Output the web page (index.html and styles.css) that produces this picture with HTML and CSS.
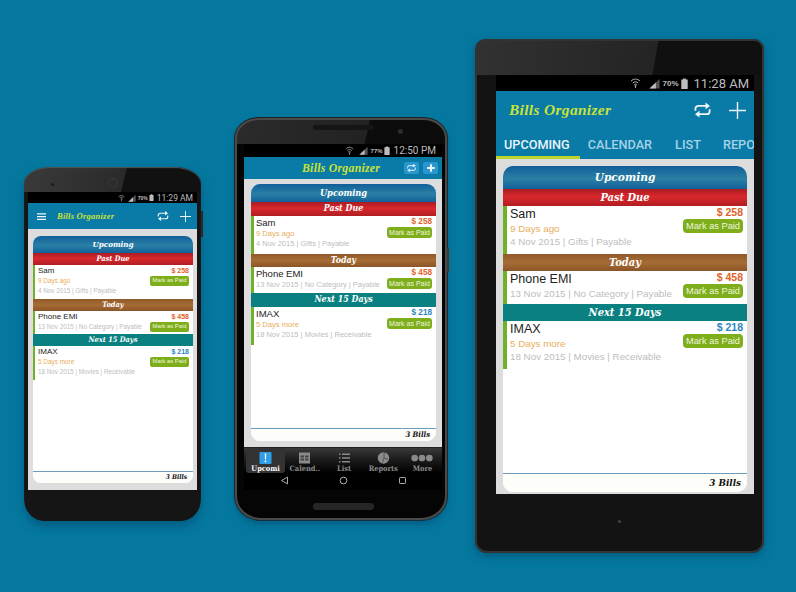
FILE: index.html
```html
<!DOCTYPE html>
<html lang="en">
<head>
<meta charset="utf-8">
<title>Bills Organizer</title>
<link rel="stylesheet" href="styles.css">
</head>
<body>
<svg class="defs" aria-hidden="true">
  <symbol id="wifi" viewBox="0 0 24 24"><path d="M2 8c6-6 14-6 20 0M6 12c4-3.500 8-3.500 12 0M9 15.500c2-1.500 4-1.500 6 0" fill="none" stroke="currentColor" stroke-width="2"/><path d="M10 17h4v2h-1v4h-2v-4h-1z" fill="currentColor"/></symbol>
  <symbol id="signal" viewBox="0 0 24 24"><path d="M23 2v21H1z" fill="#555"/><path d="M15 10v13H1z" fill="currentColor"/></symbol>
  <symbol id="battery" viewBox="0 0 14 24"><path d="M4 1h6v2h4v21H0V3h4z" fill="currentColor"/></symbol>
  <symbol id="menu" viewBox="0 0 24 24"><path d="M0 3h24v3.500H0zM0 10.500h24V14H0zM0 18h24v3.500H0z" fill="currentColor"/></symbol>
  <symbol id="repeat" viewBox="0 0 24 24"><path d="M2.500 13v-2.500a4 4 0 0 1 4-4H17M21.500 11v2.500a4 4 0 0 1-4 4H7" fill="none" stroke="currentColor" stroke-width="2.400"/><path d="M16 2l6 4.500-6 4.500zM8 13l-6 4.500 6 4.500z" fill="currentColor"/></symbol>
  <symbol id="plus" viewBox="0 0 24 24"><path d="M11 0h2v11h11v2H13v11h-2V13H0v-2h11z" fill="currentColor"/></symbol>
  <symbol id="plusbold" viewBox="0 0 24 24"><path d="M9.500 3h5v6.500H21v5h-6.500V21h-5v-6.500H3v-5h6.500z" fill="currentColor"/></symbol>
  <symbol id="alert" viewBox="0 0 24 24"><rect width="24" height="24" rx="2" fill="#2f9fe8"/><path d="M10.500 3h3l-.5 12h-2zM10.500 17h3v3.500h-3z" fill="#fff"/></symbol>
  <symbol id="cal" viewBox="0 0 24 24"><path d="M1 1h22v22H1z" fill="#8a8a8a"/><path d="M4 7h7v4H4zM13 7h7v4h-7zM4 13h7v4H4zM13 13h7v4h-7z" fill="#444"/></symbol>
  <symbol id="list" viewBox="0 0 24 24"><path d="M1 3h3v3H1zM7 3h16v3H7zM1 10.500h3v3H1zM7 10.500h16v3H7zM1 18h3v3H1zM7 18h16v3H7z" fill="#8a8a8a"/></symbol>
  <symbol id="pie" viewBox="0 0 24 24"><circle cx="12" cy="12" r="11.500" fill="#8a8a8a"/><path d="M13 12V2l2-.5M13 12l8 3M13 12l-3 9" stroke="#333" stroke-width="1.200" fill="none"/></symbol>
  <symbol id="dots" viewBox="0 0 36 12"><circle cx="6" cy="6" r="5.500" fill="#8a8a8a"/><circle cx="18" cy="6" r="5.500" fill="#8a8a8a"/><circle cx="30" cy="6" r="5.500" fill="#8a8a8a"/></symbol>
  <symbol id="back" viewBox="0 0 24 24"><path d="M20 3v18L4 12z" fill="none" stroke="currentColor" stroke-width="2.500" stroke-linejoin="round"/></symbol>
  <symbol id="home" viewBox="0 0 24 24"><circle cx="12" cy="12" r="9" fill="none" stroke="currentColor" stroke-width="2.500"/></symbol>
  <symbol id="recent" viewBox="0 0 24 24"><rect x="4" y="4" width="16" height="16" rx="2" fill="none" stroke="currentColor" stroke-width="2.500"/></symbol>
</svg>

<main class="stage">

  <section class="phone phone-sm">
    <span class="cam cam-sm"></span>
    <span class="cam cam-dot"></span>
    <span class="side side-sm"></span>
    <div class="screen">
      <div class="status">
        <svg class="st-wifi"><use href="#wifi"/></svg>
        <svg class="st-signal"><use href="#signal"/></svg>
        <span class="pct">70%</span>
        <svg class="st-batt"><use href="#battery"/></svg>
        <span class="time">11:29 AM</span>
      </div>
      <header class="appbar">
        <svg class="ic-menu"><use href="#menu"/></svg>
        <span class="title">Bills Organizer</span>
        <span class="spacer"></span>
        <svg class="ic-repeat"><use href="#repeat"/></svg>
        <svg class="ic-plus"><use href="#plus"/></svg>
      </header>
      <div class="content">
        <div class="card">
          <h2 class="sec sec-title">Upcoming</h2>
          <h3 class="sec sec-red">Past Due</h3>
          <div class="item tall">
            <div class="left"><div class="name">Sam</div><div class="sub">9 Days ago</div><div class="meta">4 Nov 2015 | Gifts | Payable</div></div>
            <div class="right"><div class="amt due">$ 258</div><button class="pay">Mark as Paid</button></div>
          </div>
          <h3 class="sec sec-brown">Today</h3>
          <div class="item short">
            <div class="left"><div class="name">Phone EMI</div><div class="meta">13 Nov 2015 | No Category | Payable</div></div>
            <div class="right"><div class="amt due">$ 458</div><button class="pay">Mark as Paid</button></div>
          </div>
          <h3 class="sec sec-teal">Next 15 Days</h3>
          <div class="item tall">
            <div class="left"><div class="name">IMAX</div><div class="sub">5 Days more</div><div class="meta">18 Nov 2015 | Movies | Receivable</div></div>
            <div class="right"><div class="amt rec">$ 218</div><button class="pay">Mark as Paid</button></div>
          </div>
          <div class="fill"></div>
          <div class="foot">3 Bills</div>
        </div>
      </div>
    </div>
  </section>

  <section class="phone phone-md">
    <span class="speaker speaker-top"></span>
    <span class="cam cam-md"></span>
    <span class="side side-md"></span>
    <div class="screen">
      <div class="status">
        <svg class="st-wifi"><use href="#wifi"/></svg>
        <svg class="st-signal"><use href="#signal"/></svg>
        <span class="pct">77%</span>
        <svg class="st-batt"><use href="#battery"/></svg>
        <span class="time">12:50 PM</span>
      </div>
      <header class="appbar">
        <span class="title">Bills Organizer</span>
        <span class="spacer"></span>
        <span class="btn-square"><svg class="ic-repeat"><use href="#repeat"/></svg></span>
        <span class="btn-square"><svg class="ic-plus"><use href="#plusbold"/></svg></span>
      </header>
      <div class="content">
        <div class="card">
          <h2 class="sec sec-title">Upcoming</h2>
          <h3 class="sec sec-red">Past Due</h3>
          <div class="item tall">
            <div class="left"><div class="name">Sam</div><div class="sub">9 Days ago</div><div class="meta">4 Nov 2015 | Gifts | Payable</div></div>
            <div class="right"><div class="amt due">$ 258</div><button class="pay">Mark as Paid</button></div>
          </div>
          <h3 class="sec sec-brown">Today</h3>
          <div class="item short">
            <div class="left"><div class="name">Phone EMI</div><div class="meta">13 Nov 2015 | No Category | Payable</div></div>
            <div class="right"><div class="amt due">$ 458</div><button class="pay">Mark as Paid</button></div>
          </div>
          <h3 class="sec sec-teal">Next 15 Days</h3>
          <div class="item tall">
            <div class="left"><div class="name">IMAX</div><div class="sub">5 Days more</div><div class="meta">18 Nov 2015 | Movies | Receivable</div></div>
            <div class="right"><div class="amt rec">$ 218</div><button class="pay">Mark as Paid</button></div>
          </div>
          <div class="fill"></div>
          <div class="foot">3 Bills</div>
        </div>
      </div>
      <nav class="bottom-tabs">
        <div class="btab active"><svg class="bt-ic"><use href="#alert"/></svg><span>Upcomi</span></div>
        <div class="btab"><svg class="bt-ic"><use href="#cal"/></svg><span>Calend..</span></div>
        <div class="btab"><svg class="bt-ic"><use href="#list"/></svg><span>List</span></div>
        <div class="btab"><svg class="bt-ic"><use href="#pie"/></svg><span>Reports</span></div>
        <div class="btab"><svg class="bt-dots"><use href="#dots"/></svg><span>More</span></div>
      </nav>
      <div class="sysnav">
        <svg class="nav-ic"><use href="#back"/></svg>
        <svg class="nav-ic"><use href="#home"/></svg>
        <svg class="nav-ic"><use href="#recent"/></svg>
      </div>
    </div>
    <span class="speaker speaker-bottom"></span>
  </section>

  <section class="phone phone-lg">
    <span class="led"></span>
    <div class="screen">
      <div class="status">
        <svg class="st-wifi"><use href="#wifi"/></svg>
        <svg class="st-signal"><use href="#signal"/></svg>
        <span class="pct">70%</span>
        <svg class="st-batt"><use href="#battery"/></svg>
        <span class="time">11:28 AM</span>
      </div>
      <header class="appbar">
        <span class="title">Bills Organizer</span>
        <span class="spacer"></span>
        <svg class="ic-repeat"><use href="#repeat"/></svg>
        <svg class="ic-plus"><use href="#plus"/></svg>
      </header>
      <div class="top-tabs">
        <span class="ttab on">UPCOMING</span>
        <span class="ttab t2">CALENDAR</span>
        <span class="ttab t3">LIST</span>
        <span class="ttab t4">REPO</span>
      </div>
      <div class="content">
        <div class="card">
          <h2 class="sec sec-title">Upcoming</h2>
          <h3 class="sec sec-red">Past Due</h3>
          <div class="item tall">
            <div class="left"><div class="name">Sam</div><div class="sub">9 Days ago</div><div class="meta">4 Nov 2015 | Gifts | Payable</div></div>
            <div class="right"><div class="amt due">$ 258</div><button class="pay">Mark as Paid</button></div>
          </div>
          <h3 class="sec sec-brown">Today</h3>
          <div class="item short">
            <div class="left"><div class="name">Phone EMI</div><div class="meta">13 Nov 2015 | No Category | Payable</div></div>
            <div class="right"><div class="amt due">$ 458</div><button class="pay">Mark as Paid</button></div>
          </div>
          <h3 class="sec sec-teal">Next 15 Days</h3>
          <div class="item tall">
            <div class="left"><div class="name">IMAX</div><div class="sub">5 Days more</div><div class="meta">18 Nov 2015 | Movies | Receivable</div></div>
            <div class="right"><div class="amt rec">$ 218</div><button class="pay">Mark as Paid</button></div>
          </div>
          <div class="fill"></div>
          <div class="foot">3 Bills</div>
        </div>
      </div>
    </div>
  </section>

</main>
</body>
</html>
```

FILE: styles.css
```css
* { box-sizing: border-box; }
html, body { margin: 0; padding: 0; }
body { background: #05789f; font-family: "Liberation Sans", Arial, sans-serif; }
.defs { position: absolute; width: 0; height: 0; overflow: hidden; }

.stage {
  position: relative;
  width: 796px;
  height: 592px;
  overflow: hidden;
  background: #05789f;
}

/* each device sits on a free canvas */
.phone {
  position: absolute;
  display: flex;
  flex-direction: column;
}

.phone-sm {
  left: 24px; top: 167px; width: 177px; height: 354px;
  padding: 25px 4px 31px 4px;
  border-radius: 26px 26px 20px 20px / 16px 16px 22px 22px;
  background: linear-gradient(104deg, #3a3a3a 0%, #2a2a2a 56%, #111 56.6%) top / 100% 25px no-repeat, #151515;
  box-shadow: 0 5px 9px rgba(0, 70, 105, .55), inset 0 1px 1px #555;
  --status: 11px; --bar: 26px;
  --pad-l: 5px; --pad-r: 4px; --pad-t: 7px; --pad-b: 7px;
  --h-title: 17px; --h-sec: 12px; --h-tall: 34px; --h-short: 23px; --h-foot: 12px;
  --f-sec: 7.400px; --f-title: 8px; --f-foot: 6.600px;
  --bar-w: 2px; --inset: 3px;
  --f-name: 8px; --f-sub: 6.400px; --f-meta: 6.300px; --f-amt: 7px; --f-btn: 5.800px;
  --pt: 1px; --nl: 10px; --sl: 10px; --ml: 9px; --al: 10px; --rp: 1px;
  --btn-w: 39px; --btn-h: 9.500px; --radius: 8px; --btn-r: 2px;
}

.phone-md {
  left: 235px; top: 118px; width: 212px; height: 402px;
  padding: 24px 3px 28px 7px;
  border-radius: 24px 24px 26px 26px / 20px 20px 24px 24px;
  border: 2px solid #4a4a4a;
  background: linear-gradient(102deg, #2b2b2b 0%, #222 62%, #0c0c0c 62.6%) top / 100% 24px no-repeat, #050505;
  box-shadow: 0 4px 7px rgba(0, 70, 105, .55), 0 0 0 1px #222;
  --status: 13px; --bar: 22px;
  --pad-l: 7px; --pad-r: 6px; --pad-t: 5px; --pad-b: 6px;
  --h-title: 18px; --h-sec: 13.500px; --h-tall: 38px; --h-short: 26px; --h-foot: 13px;
  --f-sec: 8.800px; --f-title: 9.200px; --f-foot: 7.600px;
  --bar-w: 3px; --inset: 2px;
  --f-name: 9.500px; --f-sub: 7.600px; --f-meta: 7.500px; --f-amt: 8.200px; --f-btn: 7px;
  --pt: 1px; --nl: 12px; --sl: 10px; --ml: 10px; --al: 11px; --rp: 0px;
  --btn-w: 45px; --btn-h: 11px; --radius: 9px; --btn-r: 3px;
}

.phone-lg {
  left: 475px; top: 39px; width: 289px; height: 514px;
  padding: 36px 10px 59px 21px;
  border-radius: 10px 10px 12px 12px;
  background: linear-gradient(100deg, #323232 0%, #242424 62%, #101010 62.4%) top / 100% 36px no-repeat, #131313;
  box-shadow: 0 3px 8px rgba(0, 70, 105, .6), inset 0 0 0 2px #333;
  --status: 16px; --bar: 38px;
  --pad-l: 7px; --pad-r: 7px; --pad-t: 7px; --pad-b: 2px;
  --h-title: 23px; --h-sec: 17px; --h-tall: 48px; --h-short: 33px; --h-foot: 19px;
  --f-sec: 11px; --f-title: 11.800px; --f-foot: 9.800px;
  --bar-w: 4px; --inset: 3px;
  --f-name: 12.500px; --f-sub: 9.800px; --f-meta: 9.800px; --f-amt: 10.500px; --f-btn: 9.250px;
  --pt: 1px; --nl: 15px; --sl: 13px; --ml: 14px; --al: 13px; --rp: 0px;
  --btn-w: 60px; --btn-h: 14px; --radius: 10px; --btn-r: 4px;
}

/* hardware details */
.cam, .led, .speaker, .side { position: absolute; }
.cam-sm { left: 85px; top: 12px; width: 8px; height: 8px; border-radius: 50%; background: #2c2c2c; box-shadow: 0 0 0 1px #3a3a3a; }
.cam-dot { left: 27px; top: 16px; width: 3px; height: 3px; border-radius: 50%; background: #1c1c1c; }
.cam-md { left: 161px; top: 9px; width: 5px; height: 5px; border-radius: 50%; background: #2d2d2d; }
.side-sm { right: -2px; top: 44px; width: 2px; height: 26px; background: #2b2b2b; }
.side-md { right: -4px; top: 128px; width: 2px; height: 24px; background: #3a3a3a; }
.speaker { height: 6px; border-radius: 3px; background: #222; left: 76px; width: 61px; }
.speaker-top { top: 5px; height: 5px; background: #151515; }
.speaker-bottom { bottom: 8px; height: 7px; background: #262626; }
.led { left: 143px; top: 481px; width: 3px; height: 3px; border-radius: 50%; background: #444; }

/* screen */
.screen { flex: 1; display: flex; flex-direction: column; min-height: 0; }

.status {
  height: var(--status);
  flex: none;
  background: #000;
  color: #bdbdbd;
  display: flex;
  align-items: center;
  justify-content: flex-end;
}
.time { font-family: Roboto, sans-serif; }
.pct { font-weight: 700; }
.phone-sm .status { padding-right: 4px; }
.phone-sm .time { font-size: 8.500px; margin-left: 3px; }
.phone-sm .pct { font-size: 5px; margin: 0 1px 0 2px; }
.phone-sm .st-wifi { width: 7px; height: 8px; margin-right: 3px; }
.phone-sm .st-signal { width: 8px; height: 8px; }
.phone-sm .st-batt { width: 5px; height: 7px; }
.phone-md .status { padding-right: 6px; }
.phone-md .time { font-size: 10px; margin-left: 4px; }
.phone-md .pct { font-size: 6px; margin: 0 1px 0 3px; }
.phone-md .st-wifi { width: 9px; height: 9px; margin-right: 5px; }
.phone-md .st-signal { width: 9px; height: 9px; }
.phone-md .st-batt { width: 6px; height: 9px; }
.phone-lg .status { padding-right: 5px; }
.phone-lg .time { font-size: 13px; margin-left: 6px; }
.phone-lg .pct { font-size: 8px; margin: 0 2px 0 3px; }
.phone-lg .st-wifi { width: 11px; height: 12px; margin-right: 8px; }
.phone-lg .st-signal { width: 11px; height: 11px; }
.phone-lg .st-batt { width: 7px; height: 11px; }

.appbar {
  height: var(--bar);
  flex: none;
  background: #0a7aa6;
  color: #eef6fa;
  display: flex;
  align-items: center;
}
.title {
  font-family: "Liberation Serif", serif;
  font-style: italic;
  font-weight: 700;
  color: #c9e338;
  white-space: nowrap;
}
.spacer { flex: 1; }
.phone-sm .appbar { padding: 0 6px 0 9px; }
.phone-sm .ic-menu { width: 9px; height: 9px; margin-right: 11px; }
.phone-sm .title { font-size: 8.600px; letter-spacing: .2px; }
.phone-sm .ic-repeat { width: 12px; height: 12px; margin-right: 11px; }
.phone-sm .ic-plus { width: 11px; height: 11px; }
.phone-md .appbar { padding: 0 4px 0 58px; }
.phone-md .title { font-size: 11.800px; letter-spacing: .25px; }
.btn-square {
  width: 15px; height: 12px;
  border-radius: 2px;
  background: #2a96cf;
  display: flex; align-items: center; justify-content: center;
  margin-left: 4px;
}
.phone-md .ic-repeat { width: 11px; height: 10px; }
.phone-md .ic-plus { width: 10px; height: 10px; }
.phone-lg .appbar { padding: 0 8px 0 13px; }
.phone-lg .title { font-size: 15.400px; letter-spacing: .35px; }
.phone-lg .ic-repeat { width: 19px; height: 18px; margin-right: 17px; }
.phone-lg .ic-plus { width: 17px; height: 17px; }

/* large tablet tabs */
.top-tabs {
  height: 30px;
  flex: none;
  background: #0a7aa6;
  display: flex;
  align-items: center;
  overflow: hidden;
  position: relative;
  padding: 0 0 0 8px;
  white-space: nowrap;
}
.top-tabs::after {
  content: "";
  position: absolute;
  left: 0; bottom: 0;
  width: 84px; height: 3px;
  background: #bcd52f;
}
.ttab { font-family: Roboto, sans-serif; font-weight: 500; font-size: 12.700px; color: #a6d2e6; flex: none; }
.ttab.on { color: #e9f5fa; }
.t2 { margin-left: 18px; }
.t3 { margin-left: 23px; }
.t4 { margin-left: 22px; }

/* content */
.content {
  flex: 1;
  min-height: 0;
  background: #dddddd;
  padding: var(--pad-t) var(--pad-r) var(--pad-b) var(--pad-l);
  display: flex;
}
.card {
  flex: 1;
  min-width: 0;
  background: #fff;
  border-radius: var(--radius);
  display: flex;
  flex-direction: column;
  overflow: hidden;
}
.sec {
  margin: 0;
  flex: none;
  height: var(--h-sec);
  line-height: var(--h-sec);
  text-align: center;
  color: #fff;
  font-family: "DejaVu Serif Condensed", "DejaVu Serif", serif;
  font-stretch: condensed;
  font-style: italic;
  font-weight: 700;
  font-size: var(--f-sec);
}
.sec-title {
  height: var(--h-title);
  line-height: var(--h-title);
  font-size: var(--f-title);
  background: linear-gradient(#115f9a 0%, #2a80a4 55%, #12619c 100%);
}
.sec-red { background: linear-gradient(#a81c22 0%, #d9282d 45%, #b01d22 100%); }
.sec-brown { background: linear-gradient(#8f5a2a 0%, #a76c35 50%, #8a5527 100%); }
.sec-teal { background: #0a8080; }

.item {
  flex: none;
  display: flex;
  justify-content: space-between;
  border-left: var(--bar-w) solid #6fb128;
  padding: 0 4px 0 var(--inset);
  background: #fff;
}
.tall { height: var(--h-tall); }
.short { height: var(--h-short); }
.left { padding-top: var(--pt); min-width: 0; white-space: nowrap; }
.name { font-size: var(--f-name); line-height: var(--nl); color: #222; }
.sub { font-size: var(--f-sub); line-height: var(--sl); color: #e8ae5a; }
.meta { font-size: var(--f-meta); line-height: var(--ml); color: #bdbdbd; }
.right { padding-top: var(--rp); display: flex; flex-direction: column; align-items: flex-end; flex: none; }
.amt { font-size: var(--f-amt); line-height: var(--al); font-weight: 700; }
.due { color: #e2622a; }
.rec { color: #2a86bd; }
.pay {
  display: block;
  width: var(--btn-w);
  height: var(--btn-h);
  margin: 0;
  padding: 0;
  border: 0;
  border-radius: var(--btn-r);
  background: #7fae1c;
  color: #eef6dc;
  font-family: "Liberation Sans", Arial, sans-serif;
  font-size: var(--f-btn);
  line-height: var(--btn-h);
  text-align: center;
  white-space: nowrap;
}
.fill { flex: 1; }
.foot {
  flex: none;
  height: var(--h-foot);
  line-height: calc(var(--h-foot) - 2px);
  border-top: 1px solid #6c9dbf;
  background: #fdfdf9;
  text-align: right;
  padding-right: 6px;
  font-family: "DejaVu Serif Condensed", "DejaVu Serif", serif;
  font-stretch: condensed;
  font-style: italic;
  font-weight: 700;
  font-size: var(--f-foot);
  color: #111;
}

/* mid phone bottom bars */
.bottom-tabs {
  flex: none;
  height: 26px;
  display: flex;
  background: linear-gradient(#3a3a3a 0%, #1c1c1c 45%, #000 100%);
  border-top: 1px solid #222;
}
.btab {
  flex: 1 1 0;
  min-width: 0;
  display: flex;
  flex-direction: column;
  align-items: center;
  padding-top: 4px;
  color: #8c8c8c;
  font-family: "DejaVu Serif Condensed", "DejaVu Serif", serif;
  font-stretch: condensed;
  font-weight: 700;
  font-size: 7.400px;
  line-height: 10px;
  white-space: nowrap;
}
.btab.active { color: #fff; background: #333; border-radius: 3px; margin-left: 2px; }
.bt-ic { width: 13px; height: 12px; flex: none; }
.bt-dots { width: 22px; height: 12px; flex: none; padding: 2px 0; }
.sysnav {
  flex: none;
  height: 17px;
  background: #000;
  color: #b8b8b8;
  display: flex;
  align-items: flex-start;
  justify-content: center;
  gap: 50px;
  padding-top: 3px;
}
.nav-ic { width: 9px; height: 9px; }
```
